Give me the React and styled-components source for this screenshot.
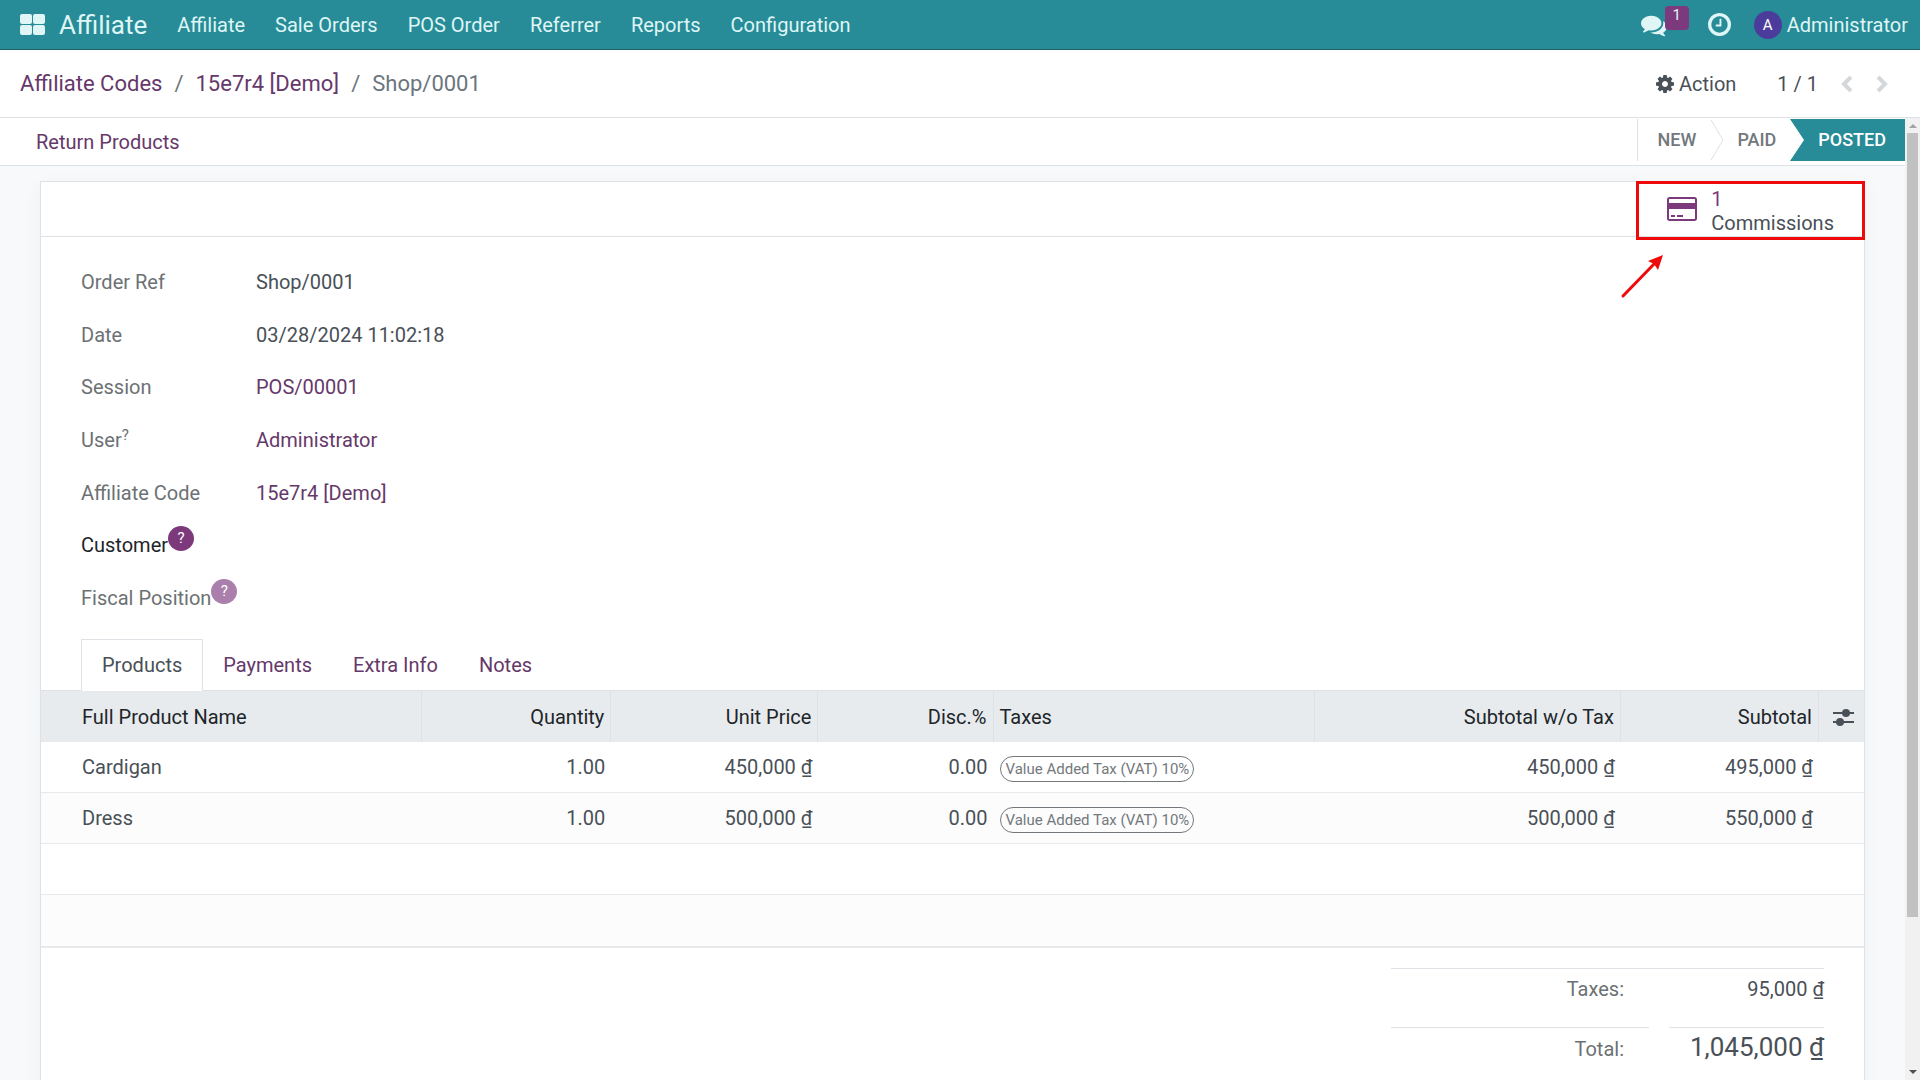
import React, { useState } from 'react';
import styled, { createGlobalStyle } from 'styled-components';

const menuItems = ['Affiliate', 'Sale Orders', 'POS Order', 'Referrer', 'Reports', 'Configuration'];

const fields = [
  { label: 'Order Ref', value: 'Shop/0001' },
  { label: 'Date', value: '03/28/2024 11:02:18' },
  { label: 'Session', value: 'POS/00001', isLink: true },
  { label: 'User', value: 'Administrator', isLink: true, hint: 'plain' },
  { label: 'Affiliate Code', value: '15e7r4 [Demo]', isLink: true },
  { label: 'Customer', value: '', hint: 'badge', isActive: true },
  { label: 'Fiscal Position', value: '', hint: 'badge' },
];

const tabs = ['Products', 'Payments', 'Extra Info', 'Notes'];

const columns = [
  { name: 'Full Product Name', width: 381 },
  { name: 'Quantity', width: 189, isNumber: true },
  { name: 'Unit Price', width: 207, isNumber: true },
  { name: 'Disc.%', width: 175, isNumber: true },
  { name: 'Taxes', width: 321 },
  { name: 'Subtotal w/o Tax', width: 306, isNumber: true },
  { name: 'Subtotal', width: 198, isNumber: true },
];

const lines = [
  { name: 'Cardigan', qty: '1.00', price: '450,000 ₫', disc: '0.00', tax: 'Value Added Tax (VAT) 10%', net: '450,000 ₫', total: '495,000 ₫' },
  { name: 'Dress', qty: '1.00', price: '500,000 ₫', disc: '0.00', tax: 'Value Added Tax (VAT) 10%', net: '500,000 ₫', total: '550,000 ₫' },
];

const App = () => {
  const [activeTab, setActiveTab] = useState('Products');

  return (
    <Page>
      <GlobalStyle />
      <Navbar>
        <AppsButton aria-label="Home menu"><AppsIcon /></AppsButton>
        <Brand href="#">Affiliate</Brand>
        {menuItems.map((item) => (
          <MenuLink key={item} href="#">{item}</MenuLink>
        ))}
        <Systray>
          <MessagesButton aria-label="Messages">
            <CommentsIcon />
            <Counter>1</Counter>
          </MessagesButton>
          <SystrayButton aria-label="Activities"><ClockIcon /></SystrayButton>
          <SystrayButton>
            <Avatar>A</Avatar>
            Administrator
          </SystrayButton>
        </Systray>
      </Navbar>

      <ControlPanel>
        <Breadcrumb aria-label="Breadcrumb">
          <Link href="#">Affiliate Codes</Link>
          <span>/</span>
          <Link href="#">15e7r4 [Demo]</Link>
          <span>/</span>
          <span>Shop/0001</span>
        </Breadcrumb>
        <ActionButton><CogIcon />Action</ActionButton>
        <Pager>
          <span>1 / 1</span>
          <PagerButton disabled aria-label="Previous"><Chevron d="M10 2 3 9l7 7" /></PagerButton>
          <PagerButton disabled aria-label="Next"><Chevron d="m2 2 7 7-7 7" /></PagerButton>
        </Pager>
      </ControlPanel>

      <Content>
        <FormView>
          <StatusBar>
            <TextButton>Return Products</TextButton>
            <Statuses>
              <Status>NEW</Status>
              <StepArrow />
              <Status>PAID</Status>
              <StepArrow filled />
              <Status current>POSTED</Status>
            </Statuses>
          </StatusBar>

          <Sheet>
            <ButtonBox>
              <StatButton>
                <CardIcon />
                <StatText>
                  <StatValue>1</StatValue>
                  <span>Commissions</span>
                </StatText>
                <Highlight />
                <PointerArrow />
              </StatButton>
            </ButtonBox>

            <Fields>
              {fields.map((field) => (
                <React.Fragment key={field.label}>
                  <FieldLabel isActive={field.isActive}>
                    {field.label}
                    {field.hint === 'plain' && <HintMark>?</HintMark>}
                    {field.hint === 'badge' && <HintBadge faded={!field.isActive}>?</HintBadge>}
                  </FieldLabel>
                  <FieldValue>
                    {field.isLink ? <Link href="#">{field.value}</Link> : field.value}
                  </FieldValue>
                </React.Fragment>
              ))}
            </Fields>

            <Tabs role="tablist">
              {tabs.map((tab) => (
                <Tab
                  key={tab}
                  role="tab"
                  aria-selected={tab === activeTab}
                  onClick={() => setActiveTab(tab)}
                >
                  {tab}
                </Tab>
              ))}
            </Tabs>

            <LinesTable>
              <colgroup>
                {columns.map((col) => <col key={col.name} width={col.width} />)}
                <col width={45} />
              </colgroup>
              <thead>
                <tr>
                  {columns.map((col) => (
                    <HeadCell key={col.name} isNumber={col.isNumber}>{col.name}</HeadCell>
                  ))}
                  <HeadCell>
                    <ColumnsButton aria-label="Optional columns"><SlidersIcon /></ColumnsButton>
                  </HeadCell>
                </tr>
              </thead>
              <tbody>
                {lines.map((line) => (
                  <Row key={line.name}>
                    <Cell>{line.name}</Cell>
                    <Cell isNumber>{line.qty}</Cell>
                    <Cell isNumber>{line.price}</Cell>
                    <Cell isNumber>{line.disc}</Cell>
                    <Cell><TaxTag>{line.tax}</TaxTag></Cell>
                    <Cell isNumber>{line.net}</Cell>
                    <Cell isNumber>{line.total}</Cell>
                    <Cell />
                  </Row>
                ))}
                <Row><Cell colSpan={8} /></Row>
                <Row><Cell colSpan={8} /></Row>
              </tbody>
            </LinesTable>

            <Totals>
              <TaxesRow>
                <TotalLabel>Taxes:</TotalLabel>
                <TotalValue>95,000 ₫</TotalValue>
              </TaxesRow>
              <TotalRow>
                <TotalLabel>Total:</TotalLabel>
                <TotalValue large>1,045,000 ₫</TotalValue>
              </TotalRow>
            </Totals>
          </Sheet>
        </FormView>

        <ScrollTrack>
          <ScrollArrow viewBox="0 0 8 4"><path d="M0 4 4 0l4 4z" fill="#a3a3a3" /></ScrollArrow>
          <ScrollThumb />
          <ScrollArrow viewBox="0 0 8 4"><path d="M0 0h8L4 4z" fill="#505050" /></ScrollArrow>
        </ScrollTrack>
      </Content>
    </Page>
  );
};

export default App;

// Icons
const AppsIcon = () => (
  <svg width="25" height="21" viewBox="0 0 25 21" fill="currentColor">
    <rect width="12" height="10" rx="2" />
    <rect x="13" width="12" height="10" rx="2" />
    <rect y="11" width="12" height="10" rx="2" />
    <rect x="13" y="11" width="12" height="10" rx="2" />
  </svg>
);

const CommentsIcon = () => (
  <svg width="26" height="26" viewBox="0 0 1792 1792" fill="currentColor">
    <path d="M1408 768q0 139-94 257t-256.500 186.500-353.500 68.500q-86 0-176-16-124 88-278 128-36 9-86 16h-3q-11 0-20.500-8t-11.500-21q-1-3-1-6.500t.5-6.500 2-6l2.500-5 3.500-5.500 4-5 4.500-5 4-4.500q5-6 23-25t26-29.500 22.500-29 25-38.500 20.500-44q-124-72-195-177t-71-224q0-139 94-257t256.500-186.500 353.500-68.500 353.500 68.500 256.500 186.500 94 257zm384 256q0 120-71 224.500t-195 176.500q10 24 20.500 44t25 38.500 22.500 29 26 29.500 23 25q1 1 4 4.500t4.500 5 4 5 3.500 5.500l2.500 5 2 6 .5 6.500-1 6.500q-3 14-13 22t-22 7q-50-7-86-16-154-40-278-128-90 16-176 16-271 0-472-132 58 4 88 4 161 0 309-45t264-129q125-92 192-212t67-254q0-77-23-152 129 71 204 178t75 230z" />
  </svg>
);

const ClockIcon = () => (
  <svg width="23" height="23" viewBox="0 128 1536 1536" fill="currentColor">
    <path d="M896 544v448q0 14-9 23t-23 9h-320q-14 0-23-9t-9-23v-64q0-14 9-23t23-9h224v-352q0-14 9-23t23-9h64q14 0 23 9t9 23zm416 352q0-148-73-273t-198-198-273-73-273 73-198 198-73 273 73 273 198 198 273 73 273-73 198-198 73-273zm224 0q0 209-103 385.500t-279.500 279.500-385.500 103-385.500-103-279.500-279.500-103-385.500 103-385.500 279.500-279.500 385.500-103 385.500 103 279.500 279.500 103 385.500z" />
  </svg>
);

const CogIcon = () => (
  <svg width="18" height="18" viewBox="0 128 1536 1536" fill="currentColor">
    <path d="M1024 896q0-106-75-181t-181-75-181 75-75 181 75 181 181 75 181-75 75-181zm512-109v222q0 12-8 23t-20 13l-185 28q-19 54-39 91 35 50 107 138 10 12 10 25t-9 23q-27 37-99 108t-94 71q-12 0-26-9l-138-108q-44 23-91 38-16 136-29 186-7 28-36 28h-222q-14 0-24.500-8.500t-11.500-21.500l-28-184q-49-16-90-37l-141 107q-10 9-25 9-14 0-25-11-126-114-165-168-7-10-7-23 0-12 8-23 15-21 51-66.500t54-70.500q-27-50-41-99l-183-27q-13-2-21-12.500t-8-23.500v-222q0-12 8-23t19-13l186-28q14-46 39-92-40-57-107-138-10-12-10-24 0-10 9-23 26-36 98.500-107.500t94.500-71.500q13 0 26 10l138 107q44-23 91-38 16-136 29-186 7-28 36-28h222q14 0 24.500 8.500t11.500 21.500l28 184q49 16 90 37l142-107q9-9 24-9 13 0 25 10 129 119 165 170 7 8 7 22 0 12-8 23-15 21-51 66.500t-54 70.500q26 50 41 98l183 28q13 2 21 12.500t8 23.500z" />
  </svg>
);

const CardIcon = () => (
  <svg width="30" height="28" viewBox="0 0 1920 1792" fill="#7c3a7c">
    <path d="M1760 128q66 0 113 47t47 113v1216q0 66-47 113t-113 47h-1600q-66 0-113-47t-47-113v-1216q0-66 47-113t113-47h1600zm-1600 128q-13 0-22.500 9.500t-9.500 22.500v224h1664v-224q0-13-9.500-22.500t-22.500-9.500h-1600zm1600 1280q13 0 22.500-9.500t9.500-22.500v-608h-1664v608q0 13 9.500 22.500t22.500 9.500h1600zm-1504-128v-128h256v128h-256zm384 0v-128h384v128h-384z" />
  </svg>
);

const Chevron = ({ d }) => (
  <svg width="12" height="18" viewBox="0 0 12 18" fill="none" stroke="currentColor" strokeWidth="4">
    <path d={d} />
  </svg>
);

const SlidersIcon = () => (
  <svg width="21" height="18" viewBox="0 0 21 18" fill="currentColor">
    <rect y="4" width="21" height="2" />
    <rect y="13" width="21" height="2" />
    <circle cx="13" cy="5" r="4" />
    <circle cx="7" cy="14" r="4" />
  </svg>
);

const StepArrow = ({ filled }) => (
  filled ? (
    <svg width="14" height="42" viewBox="0 0 14 42">
      <path d="M0 0h14v42H0l14-21z" fill="#278c97" />
    </svg>
  ) : (
    <svg width="14" height="42" viewBox="0 0 14 42">
      <path d="M1 1l12 20L1 41" fill="none" stroke="#dee2e6" />
    </svg>
  )
);

// Styled Components
const GlobalStyle = createGlobalStyle`
  * {
    box-sizing: border-box;
  }
  body {
    margin: 0;
    font-family: Roboto, 'Noto Sans', sans-serif;
    font-size: 20px;
    line-height: 30px;
    color: #495057;
    background: #fff;
  }
  button {
    font: inherit;
    color: inherit;
    padding: 0;
    border: none;
    background: none;
    cursor: pointer;
  }
  a {
    color: inherit;
    text-decoration: none;
  }
`;

const Page = styled.div`
  display: flex;
  flex-direction: column;
  height: 100vh;
  overflow: hidden;
`;

const Navbar = styled.header`
  display: flex;
  align-items: center;
  flex: none;
  height: 50px;
  padding: 0 12px 0 20px;
  background: #278c97;
  border-bottom: 1px solid #1f6068;
  color: #dff5f6;
`;

const AppsButton = styled.button`
  display: flex;
  margin-right: 14px;
`;

const Brand = styled.a`
  font-size: 26px;
  margin-right: 15px;
`;

const MenuLink = styled.a`
  padding: 0 15px;
`;

const Systray = styled.div`
  display: flex;
  align-items: center;
  gap: 23px;
  margin-left: auto;
`;

const SystrayButton = styled.button`
  display: flex;
  align-items: center;
  gap: 5px;
`;

const MessagesButton = styled(SystrayButton)`
  position: relative;
  width: 44px;
`;

const Counter = styled.span`
  position: absolute;
  top: -6px;
  left: 24px;
  width: 24px;
  height: 24px;
  border-radius: 4px;
  background: #7c3a7c;
  font-size: 15px;
  line-height: 18px;
  text-align: center;
`;

const Avatar = styled.span`
  width: 28px;
  height: 28px;
  border-radius: 50%;
  background: #4b3c9b;
  color: #fff;
  font-size: 15px;
  line-height: 28px;
  text-align: center;
`;

const ControlPanel = styled.div`
  display: flex;
  align-items: center;
  flex: none;
  height: 68px;
  padding: 0 32px 0 20px;
  border-bottom: 1px solid #dee2e6;
`;

const Link = styled.a`
  color: #66386a;
`;

const Breadcrumb = styled.nav`
  display: flex;
  gap: 12px;
  margin-right: auto;
  font-size: 22px;
  color: #6c757d;
`;

const ActionButton = styled.button`
  display: flex;
  align-items: center;
  gap: 5px;
  margin-right: 41px;
`;

const Pager = styled.div`
  display: flex;
  align-items: center;
  gap: 23px;
`;

const PagerButton = styled.button`
  display: flex;
  color: #d5d8db;
`;

const Content = styled.main`
  display: flex;
  flex: 1;
  min-height: 0;
`;

const FormView = styled.div`
  flex: 1;
  overflow: hidden;
  background: #f8f9fa;
`;

const StatusBar = styled.div`
  display: flex;
  align-items: center;
  justify-content: space-between;
  height: 48px;
  padding-left: 36px;
  background: #fff;
  border-bottom: 1px solid #dee2e6;
`;

const TextButton = styled.button`
  color: #66386a;
`;

const Statuses = styled.div`
  display: flex;
  align-self: flex-start;
  height: 42px;
  margin-top: 1px;
  border-left: 1px solid #dee2e6;
`;

const Status = styled(({ current, ...props }) => <button {...props} />)`
  padding: ${props => props.current ? '0 19px 0 14px' : '0 14px 0 13px'};
  background: ${props => props.current ? '#278c97' : 'transparent'};
  color: ${props => props.current ? '#fff' : '#73787c'};
  font-size: 18px;
  font-weight: 500;

  &:first-child {
    padding-left: 20px;
  }
`;

const Sheet = styled.section`
  margin: 15px 40px 0;
  min-height: 1000px;
  background: #fff;
  border: 1px solid #dee2e6;
  box-shadow: 0 5px 20px rgba(0, 0, 0, 0.04);
`;

const ButtonBox = styled.div`
  display: flex;
  justify-content: flex-end;
  height: 55px;
  border-bottom: 1px solid #dee2e6;
`;

const StatButton = styled.button`
  position: relative;
  display: flex;
  align-items: center;
  gap: 14px;
  padding: 0 30px 0 31px;
`;

const StatText = styled.span`
  display: flex;
  flex-direction: column;
  padding-top: 3px;
  line-height: 24px;
  text-align: left;
`;

const StatValue = styled.span`
  color: #7c3a7c;
`;

const Highlight = styled.span`
  position: absolute;
  top: -1px;
  right: -1px;
  bottom: -4px;
  left: 0;
  border: 3px solid #ee0a0a;
`;

const PointerArrow = () => (
  <ArrowSvg viewBox="0 0 44 46">
    <path d="M3 42 35 9" stroke="#ee0a0a" strokeWidth="3" strokeLinecap="round" />
    <path d="M43 1 38 16 34 10 28 7z" fill="#ee0a0a" />
  </ArrowSvg>
);

const ArrowSvg = styled.svg`
  position: absolute;
  top: 72px;
  left: -16px;
  width: 44px;
  height: 46px;
`;

const Fields = styled.dl`
  display: grid;
  grid-template-columns: 175px 1fr;
  grid-auto-rows: 1fr;
  align-items: center;
  height: 368px;
  margin: 19px 40px 15px;
`;

const FieldLabel = styled(({ isActive, ...props }) => <dt {...props} />)`
  display: flex;
  color: ${props => props.isActive ? '#212529' : '#6c7174'};
  white-space: nowrap;
`;

const FieldValue = styled.dd`
  margin: 0;
`;

const HintMark = styled.span`
  font-size: 15px;
  line-height: 20px;
`;

const HintBadge = styled(({ faded, ...props }) => <span {...props} />)`
  width: 26px;
  height: 25px;
  margin-top: -4px;
  border-radius: 50%;
  background: ${props => props.faded ? '#ab7fab' : '#7c3a7c'};
  color: #fff;
  font-size: 15px;
  line-height: 25px;
  text-align: center;
`;

const Tabs = styled.div`
  display: flex;
  padding-left: 40px;
  margin-bottom: -1px;
`;

const Tab = styled.button`
  height: 52px;
  margin-right: -1px;
  padding: 0 20px;
  border: 1px solid transparent;
  color: #66386a;

  &[aria-selected='true'] {
    position: relative;
    background: #fff;
    border-color: #dee2e6;
    border-bottom-color: #fff;
    color: #495057;
  }
`;

const LinesTable = styled.table`
  width: 100%;
  table-layout: fixed;
  border-spacing: 0;
`;

const HeadCell = styled(({ isNumber, ...props }) => <th {...props} />)`
  height: 52px;
  padding: 0 6px;
  border-top: 1px solid #dee2e6;
  border-right: 1px solid #dee2e6;
  background: #e7ebee;
  color: #212529;
  font-weight: 400;
  text-align: ${props => props.isNumber ? 'right' : 'left'};

  &:first-child {
    padding-left: 41px;
  }
  &:last-child {
    padding-left: 14px;
    border-right: none;
  }
`;

const Row = styled.tr`
  &:nth-child(even) {
    background: #fcfcfc;
  }
  &:last-child td {
    height: 53px;
    border-bottom: 2px solid #e7e9eb;
  }
`;

const Cell = styled(({ isNumber, ...props }) => <td {...props} />)`
  height: 51px;
  padding: 0 6px;
  border-bottom: 1px solid #e7e9eb;
  text-align: ${props => props.isNumber ? 'right' : 'left'};

  &:first-child {
    padding-left: 41px;
  }
`;

const ColumnsButton = styled.button`
  display: flex;
  color: #495057;
`;

const TaxTag = styled.span`
  display: inline-block;
  height: 26px;
  padding: 0 4px 0 5px;
  border: 1px solid #73787c;
  border-radius: 13px;
  color: #73787c;
  font-size: 15px;
  line-height: 25px;
  vertical-align: middle;
`;

const Totals = styled.div`
  width: 433px;
  margin: 20px 40px 0 auto;
`;

const TaxesRow = styled.div`
  display: flex;
  justify-content: space-between;
  height: 59px;
  padding-top: 5px;
  border-top: 1px solid #dee2e6;
`;

const TotalRow = styled.div`
  display: flex;
  gap: 20px;

  & > * {
    padding-top: 6px;
    border-top: 1px solid #dee2e6;
  }
`;

const TotalLabel = styled.span`
  width: 258px;
  padding-right: 25px;
  color: #6c7174;
  text-align: right;
`;

const TotalValue = styled(({ large, ...props }) => <span {...props} />)`
  flex: 1;
  font-size: ${props => props.large ? '26px' : '20px'};
  line-height: ${props => props.large ? '26px' : '30px'};
  text-align: right;
`;

const ScrollTrack = styled.div`
  display: flex;
  flex-direction: column;
  align-items: center;
  flex: none;
  width: 15px;
  padding: 6px 0;
  background: #f1f1f1;
`;

const ScrollArrow = styled.svg`
  flex: none;
  width: 8px;
  height: 4px;
`;

const ScrollThumb = styled.div`
  width: 11px;
  height: calc(83% - 5px);
  margin: 5px 0 auto;
  background: #c1c1c1;
`;
